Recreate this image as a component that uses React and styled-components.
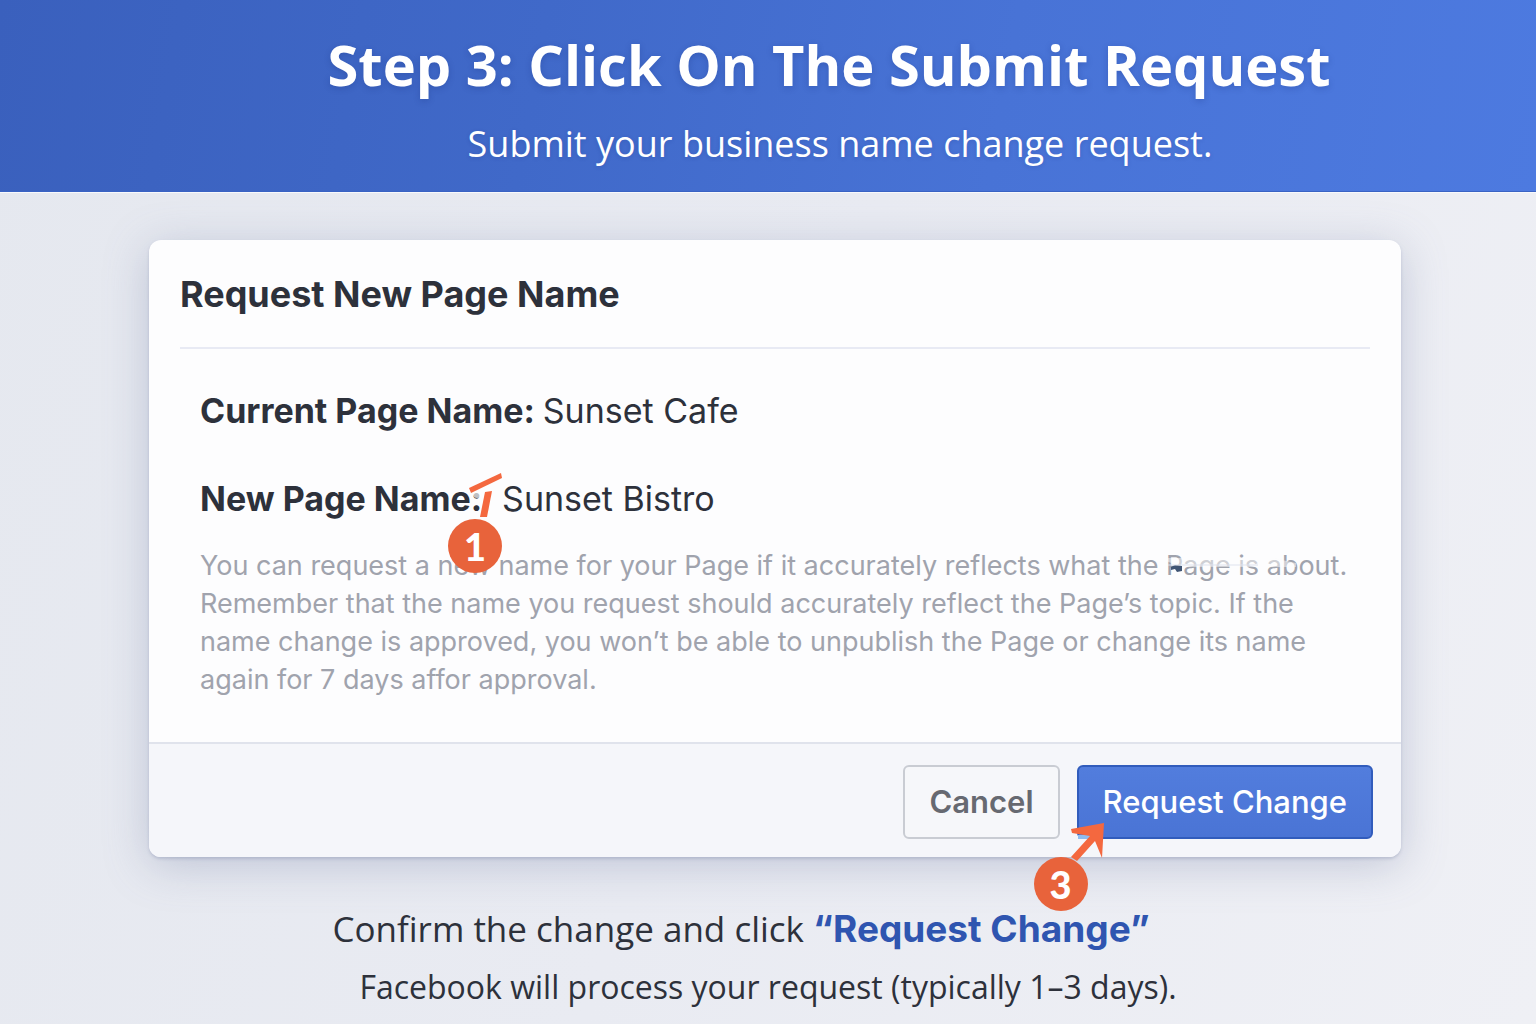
import React from 'react';
import styled, { createGlobalStyle } from 'styled-components';

const GlobalStyle = createGlobalStyle`
  * {
    box-sizing: border-box;
  }

  body {
    margin: 0;
    background: #eaecf3;
    color: #2d313b;
    font-family: Inter, 'Liberation Sans', sans-serif;
  }
`;

const Page = styled.div`
  min-height: 100vh;
  overflow: hidden;
  background: linear-gradient(110deg, #e5e8ef 0%, #e9ebf2 50%, #eff0f5 100%);
`;

const Banner = styled.header`
  display: flex;
  flex-direction: column;
  align-items: center;
  gap: 22px;
  padding: 30px 0 24px 122px;
  border-bottom: 1px solid #3a63c4;
  background: linear-gradient(100deg, #3a60bd 0%, #4069c9 35%, #4873d6 65%, #4d7ae0 100%);
  box-shadow: 0 1px 0 #f8f9fc;
  color: #fff;
  font-family: 'Open Sans', 'Noto Sans', sans-serif;
  text-align: center;
`;

const BannerTitle = styled.h1`
  margin: 0;
  font-size: 56px;
  font-weight: 700;
  line-height: 68px;
  text-shadow: 0 2px 6px rgba(20, 45, 120, 0.25);
`;

const BannerText = styled.p`
  margin: 0;
  padding-left: 22px;
  font-size: 36px;
  line-height: 47px;
  text-shadow: 0 1px 4px rgba(20, 45, 120, 0.2);
`;

const Main = styled.main`
  padding: 48px 135px 0 149px;
`;

const Dialog = styled.section`
  border-radius: 12px;
  background: #fdfdfe;
  box-shadow: 0 2px 3px rgba(100, 112, 150, 0.25), 0 8px 44px rgba(110, 122, 160, 0.34);
`;

const DialogHeader = styled.div`
  margin: 0 31px;
  padding: 32px 0 30px;
  border-bottom: 2px solid #e8eaf4;
`;

const DialogTitle = styled.h2`
  margin: 0;
  font-size: 36px;
  font-weight: 700;
  line-height: 45px;
`;

const DialogBody = styled.div`
  padding: 40px 32px 43px 51px;
`;

const Fields = styled.dl`
  display: flex;
  flex-direction: column;
  gap: 44px;
  margin: 0 0 26px;
  font-size: 34px;
  line-height: 44px;
`;

const Field = styled.div`
  display: flex;
  gap: ${({ $wide }) => ($wide ? 20 : 8)}px;
`;

const FieldName = styled.dt`
  position: relative;
  font-weight: 700;
`;

const FieldValue = styled.dd`
  margin: 0;
`;

const HelpText = styled.p`
  margin: 0;
  color: #a0a3ad;
  font-size: 27px;
  line-height: 38px;
`;

const Smudged = styled.span`
  position: relative;
`;

const DialogFooter = styled.div`
  display: flex;
  justify-content: flex-end;
  gap: 17px;
  padding: 21px 28px 18px;
  border-top: 2px solid #e0e3ec;
  border-radius: 0 0 12px 12px;
  background: #f5f6fa;
`;

const Button = styled.button`
  height: 74px;
  padding: 0 24px 2px;
  border: 2px solid ${({ $primary }) => ($primary ? '#315cbc' : '#c9ccd3')};
  border-radius: 6px;
  background: ${({ $primary }) =>
    $primary ? 'linear-gradient(180deg, #527ddd, #4a74d5)' : '#f6f7fa'};
  color: ${({ $primary }) => ($primary ? '#fff' : '#666971')};
  font-family: inherit;
  font-size: 31px;
  font-weight: ${({ $primary }) => ($primary ? 500 : 600)};
  cursor: pointer;
`;

const ButtonAnchor = styled.div`
  position: relative;
`;

const Badge = styled.span`
  position: absolute;
  z-index: 1;
  left: ${({ $left }) => $left}px;
  top: ${({ $top }) => $top}px;
  display: flex;
  align-items: center;
  justify-content: center;
  width: 54px;
  height: 54px;
  border-radius: 50%;
  background: #e8633b;
  color: #fff;
  font-family: Lato, 'Open Sans', sans-serif;
  font-size: 38px;
  font-weight: 900;
  line-height: 52px;
`;

const Pointer = styled.svg`
  position: absolute;
  left: ${({ $left }) => $left}px;
  top: ${({ $top }) => $top}px;
  pointer-events: none;
`;

const Notes = styled.div`
  display: flex;
  flex-direction: column;
  align-items: center;
  gap: 12px;
  padding-top: 46px;
  font-family: 'Open Sans', 'Noto Sans', sans-serif;
  text-align: center;
`;

const Instruction = styled.p`
  margin: 0;
  padding-right: 68px;
  font-size: 35px;
  line-height: 52px;

  strong {
    color: #2f55b0;
    font-family: Inter, 'Liberation Sans', sans-serif;
    font-size: 37px;
    font-weight: 700;
  }
`;

const Notice = styled.p`
  margin: 0;
  padding-right: 14px;
  font-size: 32px;
  line-height: 40px;
`;

const App = () => (
  <>
    <GlobalStyle />
    <Page>
      <Banner>
        <BannerTitle>Step 3: Click On The Submit Request</BannerTitle>
        <BannerText>Submit your business name change request.</BannerText>
      </Banner>

      <Main>
        <Dialog aria-labelledby="dialog-title">
          <DialogHeader>
            <DialogTitle id="dialog-title">Request New Page Name</DialogTitle>
          </DialogHeader>

          <DialogBody>
            <Fields>
              <Field>
                <FieldName>Current Page Name:</FieldName>
                <FieldValue>Sunset Cafe</FieldValue>
              </Field>
              <Field $wide>
                <FieldName>
                  New Page Name:
                  <Pointer $left={268} $top={-5} width="36" height="46" viewBox="0 0 36 46" aria-hidden="true">
                    <circle cx="9" cy="22" r="4" fill="#fdfdfe" opacity="0.7" />
                    <path d="M1 16 L33 1 L34 6 L3 21 Z" fill="#f4683f" />
                    <path d="M17 20 L24 19 L19 45 L12 45 Z" fill="#f4683f" />
                  </Pointer>
                  <Badge $left={248} $top={42}>1</Badge>
                </FieldName>
                <FieldValue>Sunset Bistro</FieldValue>
              </Field>
            </Fields>
            <HelpText>
              You can request a new name for your Page if it accurately reflects what
              the <Smudged>
                Page is
                <Pointer $left={0} $top={4} width="130" height="24" viewBox="0 0 130 24" aria-hidden="true">
                  <path d="M0 5 H106 L130 10 V14 H16 L0 8 Z" fill="#fdfdfe" opacity="0.5" />
                  <path d="M5 14 L9 12 L16 13 L16 18 L11 19 L9 16 L5 17 Z" fill="#405574" />
                  <path d="M2 12 H92" stroke="#dfe3ee" strokeWidth="1" />
                </Pointer>
              </Smudged> about. Remember that the name you request should accurately
              reflect the Page’s topic. If the name change is approved, you won’t be able to unpublish
              the Page or change its name again for 7 days affor approval.
            </HelpText>
          </DialogBody>

          <DialogFooter>
            <Button type="button">Cancel</Button>
            <ButtonAnchor>
              <Button type="button" $primary>Request Change</Button>
              <Pointer $left={-7} $top={56} width="38" height="42" viewBox="0 0 38 42" aria-hidden="true">
                <path d="M8 14 H20 V18 H8 Z" fill="#8fbdf0" />
                <path d="M34 2 L1 8 L2 12 L20 15 L1 36 L7 40 L25 20 L32 37 Z" fill="#f4683f" />
              </Pointer>
              <Badge $left={-43} $top={92}>3</Badge>
            </ButtonAnchor>
          </DialogFooter>
        </Dialog>

        <Notes>
          <Instruction>
            Confirm the change and click <strong>“Request Change”</strong>
          </Instruction>
          <Notice>Facebook will process your request (typically 1–3 days).</Notice>
        </Notes>
      </Main>
    </Page>
  </>
);

export default App;
